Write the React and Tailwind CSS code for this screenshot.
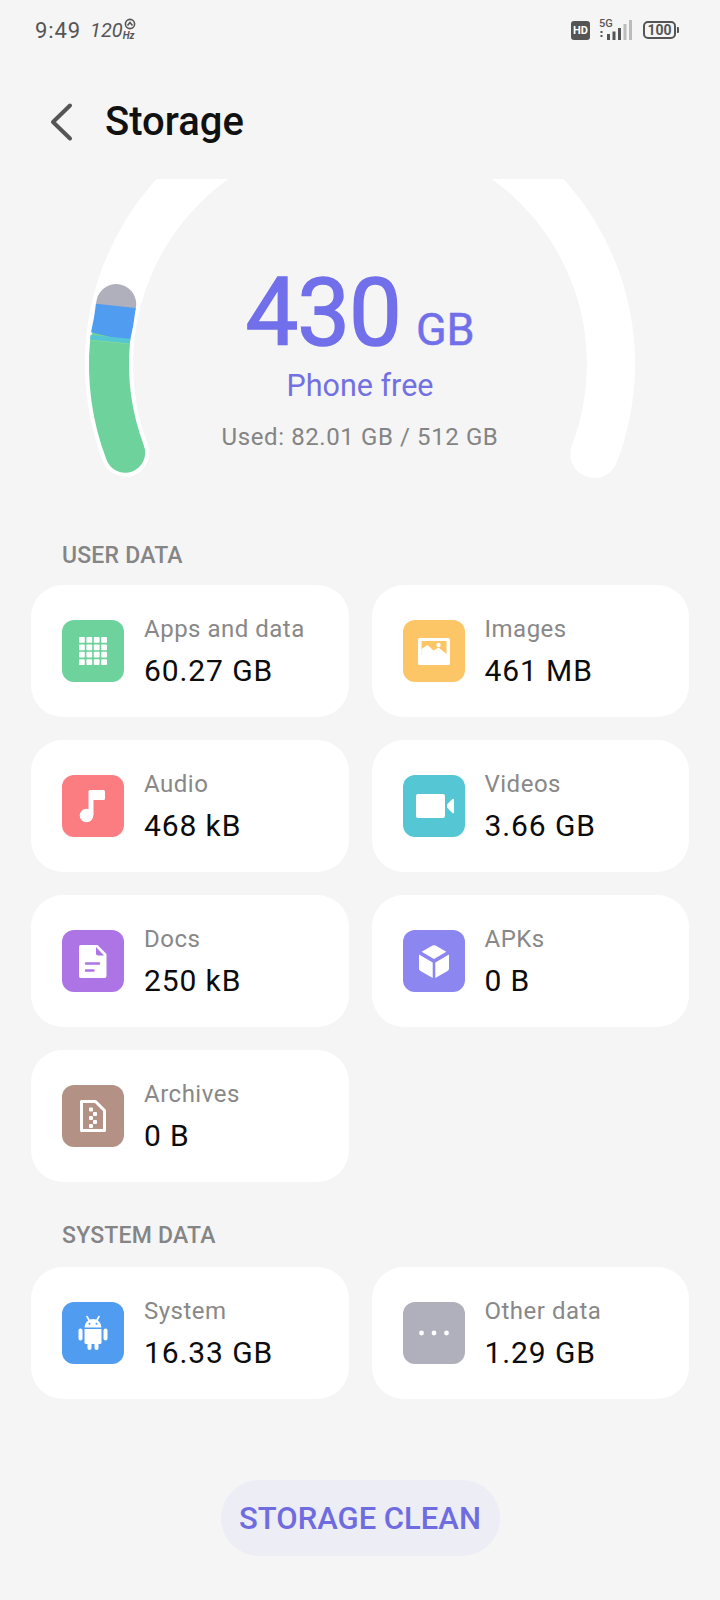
const CX = 360
const CY = 364
const R = 251

function pt(side, deg) {
  const a = (deg * Math.PI) / 180
  return [CX + side * R * Math.cos(a), CY + R * Math.sin(a)]
}

// arc on the left (side -1) or right (side 1) of the gauge, deg is below the horizontal
function arc(side, from, to) {
  const [x0, y0] = pt(side, from)
  const [x1, y1] = pt(side, to)
  return `M${x0} ${y0} A${R} ${R} 0 0 ${side < 0 ? 1 : 0} ${x1} ${y1}`
}

function Gauge() {
  return (
    <svg className="absolute left-0 top-0" width="720" height="320" viewBox="0 179 720 320" fill="none">
      <path d={arc(-1, 20.7, -60)} stroke="#ffffff" strokeWidth="48" strokeLinecap="round" />
      <path d={arc(1, 21, -60)} stroke="#ffffff" strokeWidth="48" strokeLinecap="round" />
      <path d={arc(-1, -13.4, -13.8)} stroke="#b0b0bc" strokeWidth="40" strokeLinecap="round" />
      <path d={arc(-1, 20.7, -5)} stroke="#6dd29b" strokeWidth="40" strokeLinecap="round" />
      <path d={arc(-1, -13.4, -6.2)} stroke="#4f9cf0" strokeWidth="40" />
      <path d={arc(-1, -6.2, -5.1)} stroke="#55c6d4" strokeWidth="40" />
      <path d={arc(-1, -5.1, -4.95)} stroke="#9adb96" strokeWidth="40" />
    </svg>
  )
}

function AppsIcon() {
  const cells = []
  for (let r = 0; r < 4; r++) {
    for (let c = 0; c < 4; c++) {
      cells.push(<rect key={`${r}-${c}`} x={17 + c * 7.4} y={17 + r * 7.4} width="5.8" height="5.8" rx="0.8" fill="#fff" />)
    }
  }
  return <svg width="62" height="62" viewBox="0 0 62 62">{cells}</svg>
}

function MusicIcon() {
  return (
    <svg width="62" height="62" viewBox="0 0 62 62" fill="#fff">
      <circle cx="24.5" cy="40.5" r="6.8" />
      <path d="M26.5 40V16.500a1.500 1.500 0 0 1 1.500-1.500h13.500a1.500 1.500 0 0 1 1.500 1.500v7a1.500 1.500 0 0 1-1.500 1.500H31.500v15z" />
    </svg>
  )
}

function ImageIcon() {
  return (
    <svg width="62" height="62" viewBox="0 0 62 62">
      <rect x="15" y="18" width="32" height="27" rx="1.5" fill="#fff" />
      <rect x="18.500" y="21" width="25" height="14" fill="#fcc566" />
      <path d="M18.500 29l6-4 6 5.500 5-3 8 6.500v3h-25z" fill="#fff" />
      <circle cx="35.500" cy="25" r="2.2" fill="#fff" />
    </svg>
  )
}

function VideoIcon() {
  return (
    <svg width="62" height="62" viewBox="0 0 62 62" fill="#fff">
      <rect x="13" y="19" width="29" height="24" rx="2" />
      <path d="M44 29.500l5.400-5.600a1 1 0 0 1 1.600.7v12.800a1 1 0 0 1-1.600.7L44 32.500z" />
    </svg>
  )
}

function DocIcon() {
  return (
    <svg width="62" height="62" viewBox="0 0 62 62">
      <path d="M19 15h16.500L44.500 24v22a2 2 0 0 1-2 2H19a2 2 0 0 1-2-2V17a2 2 0 0 1 2-2z" fill="#fff" />
      <path d="M34 17l8 8.500h-6a2 2 0 0 1-2-2z" fill="#ad74e6" />
      <path d="M24 33.500h13M24 40.500h7.500" stroke="#ad74e6" strokeWidth="2.4" strokeLinecap="round" />
    </svg>
  )
}

function CubeIcon() {
  return (
    <svg width="62" height="62" viewBox="0 0 62 62" fill="#fff">
      <path d="M29.500 15.600a3 3 0 0 1 3 0l10.800 6.200-12.300 7.100-12.300-7.100z" />
      <path d="M16 24.600l13.700 7.900V48l-12.200-7a3 3 0 0 1-1.500-2.600z" />
      <path d="M46 24.600l-13.700 7.900V48l12.200-7a3 3 0 0 0 1.500-2.600z" />
    </svg>
  )
}

function ArchiveIcon() {
  return (
    <svg width="62" height="62" viewBox="0 0 62 62">
      <path d="M19.500 16.500h14l9 9v20h-23z" fill="none" stroke="#fff" strokeWidth="3" strokeLinejoin="round" />
      <g fill="#fff">
        <rect x="27" y="22.500" width="4" height="4" rx="1" />
        <rect x="31" y="27" width="4" height="4" rx="1" />
        <rect x="27" y="31" width="4" height="4" rx="1" />
        <rect x="31" y="35" width="4" height="4" rx="1" />
        <rect x="27" y="39" width="4" height="4" rx="1" />
      </g>
    </svg>
  )
}

function AndroidIcon() {
  return (
    <svg width="62" height="62" viewBox="0 0 62 62" fill="#fff">
      <path d="M22.500 25.500a8.500 8.500 0 0 1 17 0z" />
      <path d="M25 14.500l2.500 4.500M37 14.500l-2.500 4.500" stroke="#fff" strokeWidth="1.6" strokeLinecap="round" />
      <path d="M22.500 27h17v13.500a1.500 1.500 0 0 1-1.500 1.500H24a1.500 1.500 0 0 1-1.500-1.500z" />
      <rect x="16.500" y="26.500" width="4" height="12" rx="2" />
      <rect x="41.500" y="26.500" width="4" height="12" rx="2" />
      <rect x="25.500" y="40" width="4" height="8" rx="2" />
      <rect x="32.500" y="40" width="4" height="8" rx="2" />
      <circle cx="27.500" cy="21.800" r="1" fill="#4f9cf0" />
      <circle cx="34.500" cy="21.800" r="1" fill="#4f9cf0" />
    </svg>
  )
}

function DotsIcon() {
  return (
    <svg width="62" height="62" viewBox="0 0 62 62" fill="#fff">
      <circle cx="18.500" cy="31" r="2.4" />
      <circle cx="31" cy="31" r="2.4" />
      <circle cx="43.500" cy="31" r="2.4" />
    </svg>
  )
}

function StatCard({ icon, bg, label, value }) {
  return (
    <div className="h-[132px] bg-white rounded-[32px] flex items-center pl-[31px] gap-[20px]">
      <div className={`w-[62px] h-[62px] rounded-[12px] flex items-center justify-center shrink-0 ${bg}`}>{icon}</div>
      <div>
        <div className="text-[24px] leading-[40px] tracking-[0.5px] text-[#888888]">{label}</div>
        <div className="text-[30px] leading-[44px] tracking-[0.9px] text-[#0c0c0c]">{value}</div>
      </div>
    </div>
  )
}

function StatusBar() {
  return (
    <div className="h-[60px] flex items-center justify-between pl-[35px] pr-[41px] text-[#555555]">
      <div className="flex items-center">
        <span className="text-[22px] tracking-[0.9px]">9:49</span>
        <span className="ml-[9px] text-[20px] italic">120</span>
        <span className="relative w-[14px] h-[28px]">
          <span className="absolute left-0 bottom-[2px] text-[10px] leading-[12px] italic font-bold">Hz</span>
          <svg className="absolute left-[1px] top-[2px]" width="12" height="12" viewBox="0 0 12 12" fill="none" stroke="#555555" strokeWidth="1.6">
            <circle cx="6" cy="6" r="4.6" />
            <path d="M3.500 7.500L6 4.500l2.500 3" />
          </svg>
        </span>
      </div>
      <div className="flex items-center">
        <div className="w-[19px] h-[19px] bg-[#555555] rounded-[3px] text-white text-[11px] leading-[19px] font-bold text-center">HD</div>
        <div className="relative w-[35px] h-[20px] ml-[9px]">
          <span className="absolute left-0 top-[-2px] text-[11px] leading-[12px] font-medium">5G</span>
          <svg className="absolute left-0 top-0" width="35" height="20" viewBox="0 0 35 20" fill="#555555">
            <rect x="1.500" y="11" width="2" height="2" />
            <rect x="1.500" y="15" width="2" height="2" />
            <rect x="8" y="14" width="3" height="6" />
            <rect x="13.500" y="11.500" width="3" height="8.500" />
            <rect x="19" y="8" width="3" height="12" />
            <rect x="24.500" y="4" width="3" height="16" fill="#bcbcbc" />
            <rect x="30" y="0" width="3" height="20" fill="#bcbcbc" />
          </svg>
        </div>
        <div className="ml-[9px] w-[33px] h-[18px] border-2 border-[#555555] rounded-[5px] text-[14px] leading-[14px] font-bold text-center">100</div>
        <div className="ml-[1px] w-[2px] h-[6px] bg-[#555555] rounded-r-[1px]"></div>
      </div>
    </div>
  )
}

export default function App() {
  return (
    <div className="w-[720px] h-[1600px] bg-[#f5f5f5] font-[Roboto,sans-serif] overflow-hidden">
      <StatusBar />

      <div className="h-[119px] flex items-center pl-[50px] pt-[4px]">
        <svg width="26" height="40" viewBox="0 0 26 40" fill="none" stroke="#555555" strokeWidth="4" strokeLinecap="round" strokeLinejoin="round">
          <path d="M20 3.500L3 20l17 16.500" />
        </svg>
        <h1 className="ml-[29px] text-[40px] leading-[48px] font-medium text-[#111111]">Storage</h1>
      </div>

      <div className="relative h-[320px]">
        <Gauge />
        <div className="relative flex flex-col items-center pt-[78px]">
          <div className="flex items-baseline text-[#716fea] leading-[112px]">
            <span className="text-[94px] tracking-[-1px] [-webkit-text-stroke:1.5px_#716fea]">430</span>
            <span className="ml-[15px] text-[45px] [-webkit-text-stroke:0.5px_#716fea]">GB</span>
          </div>
          <div className="text-[30.500px] leading-[40px] text-[#7371e2] mt-[-20px]">Phone free</div>
          <div className="text-[24px] leading-[32px] tracking-[0.6px] text-[#848484] mt-[15px]">Used: 82.01 GB / 512 GB</div>
        </div>
      </div>

      <div className="px-[62px] h-[86px] pt-[41px] text-[23px] leading-[32px] font-medium tracking-[0.2px] text-[#858585]">USER DATA</div>
      <div className="px-[31px] grid grid-cols-2 gap-x-[23px] gap-y-[23px]">
        <StatCard icon={<AppsIcon />} bg="bg-[#6dd29b]" label="Apps and data" value="60.27 GB" />
        <StatCard icon={<ImageIcon />} bg="bg-[#fcc566]" label="Images" value="461 MB" />
        <StatCard icon={<MusicIcon />} bg="bg-[#fb7d82]" label="Audio" value="468 kB" />
        <StatCard icon={<VideoIcon />} bg="bg-[#55c6d4]" label="Videos" value="3.66 GB" />
        <StatCard icon={<DocIcon />} bg="bg-[#ad74e6]" label="Docs" value="250 kB" />
        <StatCard icon={<CubeIcon />} bg="bg-[#8c86f0]" label="APKs" value="0 B" />
        <StatCard icon={<ArchiveIcon />} bg="bg-[#b39184]" label="Archives" value="0 B" />
      </div>

      <div className="px-[62px] h-[85px] pt-[38px] text-[23px] leading-[32px] font-medium tracking-[0.2px] text-[#858585]">SYSTEM DATA</div>
      <div className="px-[31px] grid grid-cols-2 gap-x-[23px]">
        <StatCard icon={<AndroidIcon />} bg="bg-[#4f9cf0]" label="System" value="16.33 GB" />
        <StatCard icon={<DotsIcon />} bg="bg-[#b0b0bc]" label="Other data" value="1.29 GB" />
      </div>

      <div className="flex justify-center pt-[81px]">
        <button className="w-[279px] h-[76px] pt-[2px] rounded-full bg-[#ecedf5] text-[31px] font-medium text-[#6f6ce0]">STORAGE CLEAN</button>
      </div>
    </div>
  )
}
